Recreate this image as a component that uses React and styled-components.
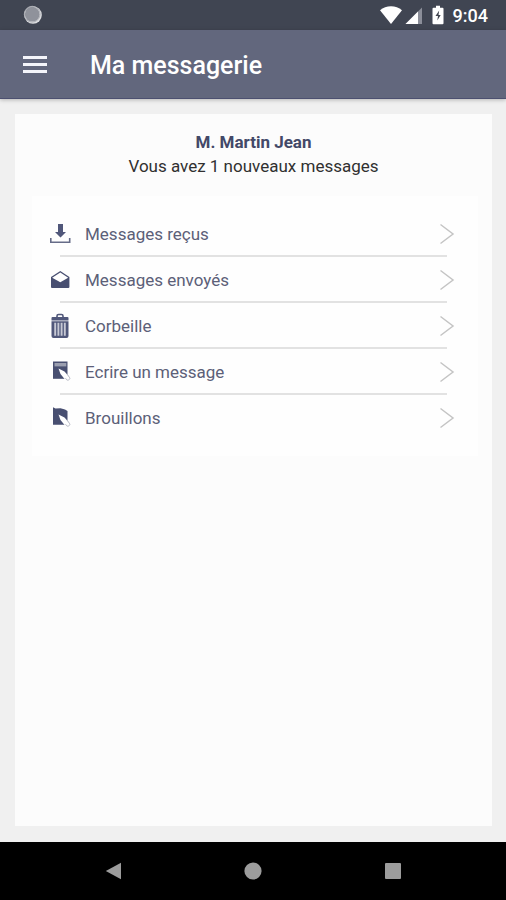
import React from "react";
import styled, { createGlobalStyle } from "styled-components";

const links = [
  { id: "inbox", label: "Messages reçus", Icon: InboxIcon },
  { id: "sent", label: "Messages envoyés", Icon: SentIcon },
  { id: "trash", label: "Corbeille", Icon: TrashIcon },
  { id: "write", label: "Ecrire un message", Icon: WriteIcon },
  { id: "drafts", label: "Brouillons", Icon: DraftIcon },
];

const App = () => {
  return (
    <Wrapper>
      <GlobalStyle />
      <StatusBar>
        <RecordIcon />
        <StatusIcons>
          <WifiIcon />
          <SignalIcon />
          <BatteryIcon />
          <time>9:04</time>
        </StatusIcons>
      </StatusBar>
      <AppBar>
        <MenuButton type="button" aria-label="Menu">
          <svg width="24" height="18" viewBox="0 0 24 18" fill="#f4f5fb">
            <path d="M0 0h24v3H0zM0 7h24v3H0zM0 14h24v3H0z" />
          </svg>
        </MenuButton>
        <h1>Ma messagerie</h1>
      </AppBar>
      <Main>
        <Card>
          <Summary>
            <b>M. Martin Jean</b>
            <p>Vous avez 1 nouveaux messages</p>
          </Summary>
          <Menu>
            {links.map(({ id, label, Icon }) => (
              <MenuItem key={id}>
                <MenuLink href={`#${id}`}>
                  <Icon />
                  <span>{label}</span>
                  <Chevron />
                </MenuLink>
              </MenuItem>
            ))}
          </Menu>
        </Card>
      </Main>
      <NavBar>
        <NavButton type="button" aria-label="Retour">
          <svg width="18" height="18" viewBox="0 0 18 18">
            <path d="M1.800 9 17 .8v16.400z" />
          </svg>
        </NavButton>
        <NavButton type="button" aria-label="Accueil">
          <svg width="18" height="18" viewBox="0 0 18 18">
            <circle cx="9" cy="9" r="8.600" />
          </svg>
        </NavButton>
        <NavButton type="button" aria-label="Applications">
          <svg width="18" height="18" viewBox="0 0 18 18">
            <rect x="1" y="1" width="16" height="16" rx="1" />
          </svg>
        </NavButton>
      </NavBar>
    </Wrapper>
  );
};

function RecordIcon() {
  return (
    <svg width="20" height="20" viewBox="0 0 20 20">
      <circle cx="10" cy="10" r="8.800" fill="#dcdde0" />
      <circle cx="9.200" cy="9.200" r="7.400" fill="#8f929b" />
      <circle cx="9.200" cy="9.200" r="7.900" fill="none" stroke="#aeb0b6" />
    </svg>
  );
}

function WifiIcon() {
  return (
    <svg width="22" height="20" viewBox="0 0 22 20" fill="#fff">
      <path d="M11 19 0 5.200C6-.2 16-.2 22 5.200z" />
    </svg>
  );
}

function SignalIcon() {
  return (
    <svg width="18" height="20" viewBox="0 0 18 20">
      <path d="M17 2.500V19H.5z" fill="#8b8e99" />
      <path d="M13 6.500V19H.5z" fill="#fff" />
    </svg>
  );
}

function BatteryIcon() {
  return (
    <svg width="12" height="20" viewBox="0 0 12 20">
      <path
        d="M4 .8h4v2h2.500a1 1 0 0 1 1 1v14.400a1 1 0 0 1-1 1h-9a1 1 0 0 1-1-1V3.800a1 1 0 0 1 1-1H4z"
        fill="#fff"
      />
      <path d="M7.200 5.500 3.500 11H6l-.7 4.500L8.700 10H6.500z" fill="#40444f" />
    </svg>
  );
}

function InboxIcon() {
  return (
    <svg width="24" height="26" viewBox="0 0 24 26" fill="#50577a">
      <path d="M10 3h5v8h3l-5.500 5.500L7 11h3z" />
      <path
        d="M2.800 17v4.200h18.900V17"
        fill="none"
        stroke="#666c88"
        strokeWidth="1.600"
      />
    </svg>
  );
}

function SentIcon() {
  return (
    <svg width="24" height="26" viewBox="0 0 24 26">
      <path
        d="M3 10 12.300 4 21.400 10V20a1 1 0 0 1-1 1H4a1 1 0 0 1-1-1z"
        fill="#484f71"
      />
      <path d="M4.200 10.700 12.300 5.400l7.900 5.300-7.900 4.500z" fill="#fff" />
    </svg>
  );
}

function TrashIcon() {
  return (
    <svg width="24" height="26" viewBox="0 0 24 26">
      <path
        d="M9 4V3a1.500 1.500 0 0 1 1.500-1.500h3A1.500 1.500 0 0 1 15 3v1"
        fill="none"
        stroke="#50577a"
        strokeWidth="1.600"
      />
      <path d="M4.500 4h15a1 1 0 0 1 1 1v2.600h-17V5a1 1 0 0 1 1-1z" fill="#50577a" />
      <path d="M3.500 8.200h17V23a2 2 0 0 1-2 2h-13a2 2 0 0 1-2-2z" fill="#50577a" />
      <path
        d="M7.200 9.800v13M10.400 9.800v13M13.600 9.800v13M16.800 9.800v13"
        stroke="#c6c8d4"
        strokeWidth="1.900"
      />
    </svg>
  );
}

function Pen() {
  return (
    <>
      <path
        d="M10.500 9.500 16.500 12.500l6 7-3 2.500-2.500-1.500-4.500-5.500z"
        fill="#fff"
      />
      <path
        d="m17.500 19.200 1.200 1.600c1 1.200 4-.6 3-2L19 14.800"
        fill="none"
        stroke="#b9bbc6"
        strokeWidth="1"
      />
    </>
  );
}

function WriteIcon() {
  return (
    <svg width="24" height="26" viewBox="0 0 24 26">
      <path d="M5 2.500h14.500v17.300H5z" fill="#484f71" />
      <path d="M6.500 4h11.800v3.400H6.500z" fill="#9a9eaf" />
      <Pen />
    </svg>
  );
}

function DraftIcon() {
  return (
    <svg width="24" height="26" viewBox="0 0 24 26">
      <path d="m5 2.200 2.500 1.300 5-.2 4.500 1.200 2.500 1.500v13.800H5z" fill="#484f71" />
      <Pen />
    </svg>
  );
}

function Chevron() {
  return (
    <svg width="16" height="22" viewBox="0 0 16 22">
      <path
        d="M1.500 1.500 14 11 1.500 20.500"
        fill="none"
        stroke="#c4c4c4"
        strokeWidth="1.500"
      />
    </svg>
  );
}

const GlobalStyle = createGlobalStyle`
  * {
    box-sizing: border-box;
  }

  body,
  h1,
  p,
  ul {
    margin: 0;
    padding: 0;
  }

  body {
    font-family: Roboto, "Liberation Sans", sans-serif;
    background: #f0f0f0;
  }

  button {
    border: 0;
    padding: 0;
    background: none;
    cursor: pointer;
  }

  svg {
    display: block;
    flex-shrink: 0;
  }
`;

const Wrapper = styled.div`
  min-height: 100vh;
  display: flex;
  flex-direction: column;
`;

const StatusBar = styled.div`
  height: 30px;
  padding: 0 18px 0 23px;
  display: flex;
  align-items: center;
  justify-content: space-between;
  background: #404552;
`;

const StatusIcons = styled.div`
  display: flex;
  align-items: center;
  gap: 3px;
  color: #fff;

  svg:nth-of-type(3) {
    margin: 0 6px;
  }

  time {
    font-size: 18px;
    font-weight: 500;
  }
`;

const AppBar = styled.header`
  height: 69px;
  padding: 2px 23px 0;
  display: flex;
  align-items: center;
  gap: 43px;
  background: #62677d;
  border-bottom: 1px solid #4c5070;
  box-shadow: 0 1px 4px rgba(0, 0, 0, 0.25);

  h1 {
    padding-top: 2px;
    color: #fff;
    font-size: 25px;
    font-weight: 500;
    line-height: 32px;
  }
`;

const MenuButton = styled.button`
  height: 32px;
  display: flex;
  align-items: center;
`;

const Main = styled.main`
  flex: 1;
  padding: 15px 14px 16px 15px;
  display: flex;
`;

const Card = styled.section`
  flex: 1;
  background: #fcfcfc;
`;

const Summary = styled.div`
  padding: 16px 0 18px;
  color: #303030;
  font-size: 17px;
  line-height: 24px;
  text-align: center;

  b {
    color: #434968;
  }
`;

const Menu = styled.ul`
  margin: 0 14px 0 17px;
  padding: 15px 23px 17px 16px;
  list-style: none;
  background: #fefefe;
`;

const MenuItem = styled.li`
  &:not(:last-child)::after {
    content: "";
    display: block;
    height: 2px;
    margin: 0 8px 0 12px;
    background: #e2e2e2;
  }
`;

const MenuLink = styled.a`
  height: 44px;
  padding-top: 2px;
  display: flex;
  align-items: center;
  gap: 13px;
  color: #5c6078;
  font-size: 17px;
  text-decoration: none;

  span {
    flex: 1;
  }
`;

const NavBar = styled.nav`
  height: 58px;
  padding: 0 43px;
  display: flex;
  align-items: center;
  background: #000;
`;

const NavButton = styled.button`
  flex: 1;
  display: flex;
  justify-content: center;

  svg {
    fill: #9c9c9c;
  }
`;

export default App;
